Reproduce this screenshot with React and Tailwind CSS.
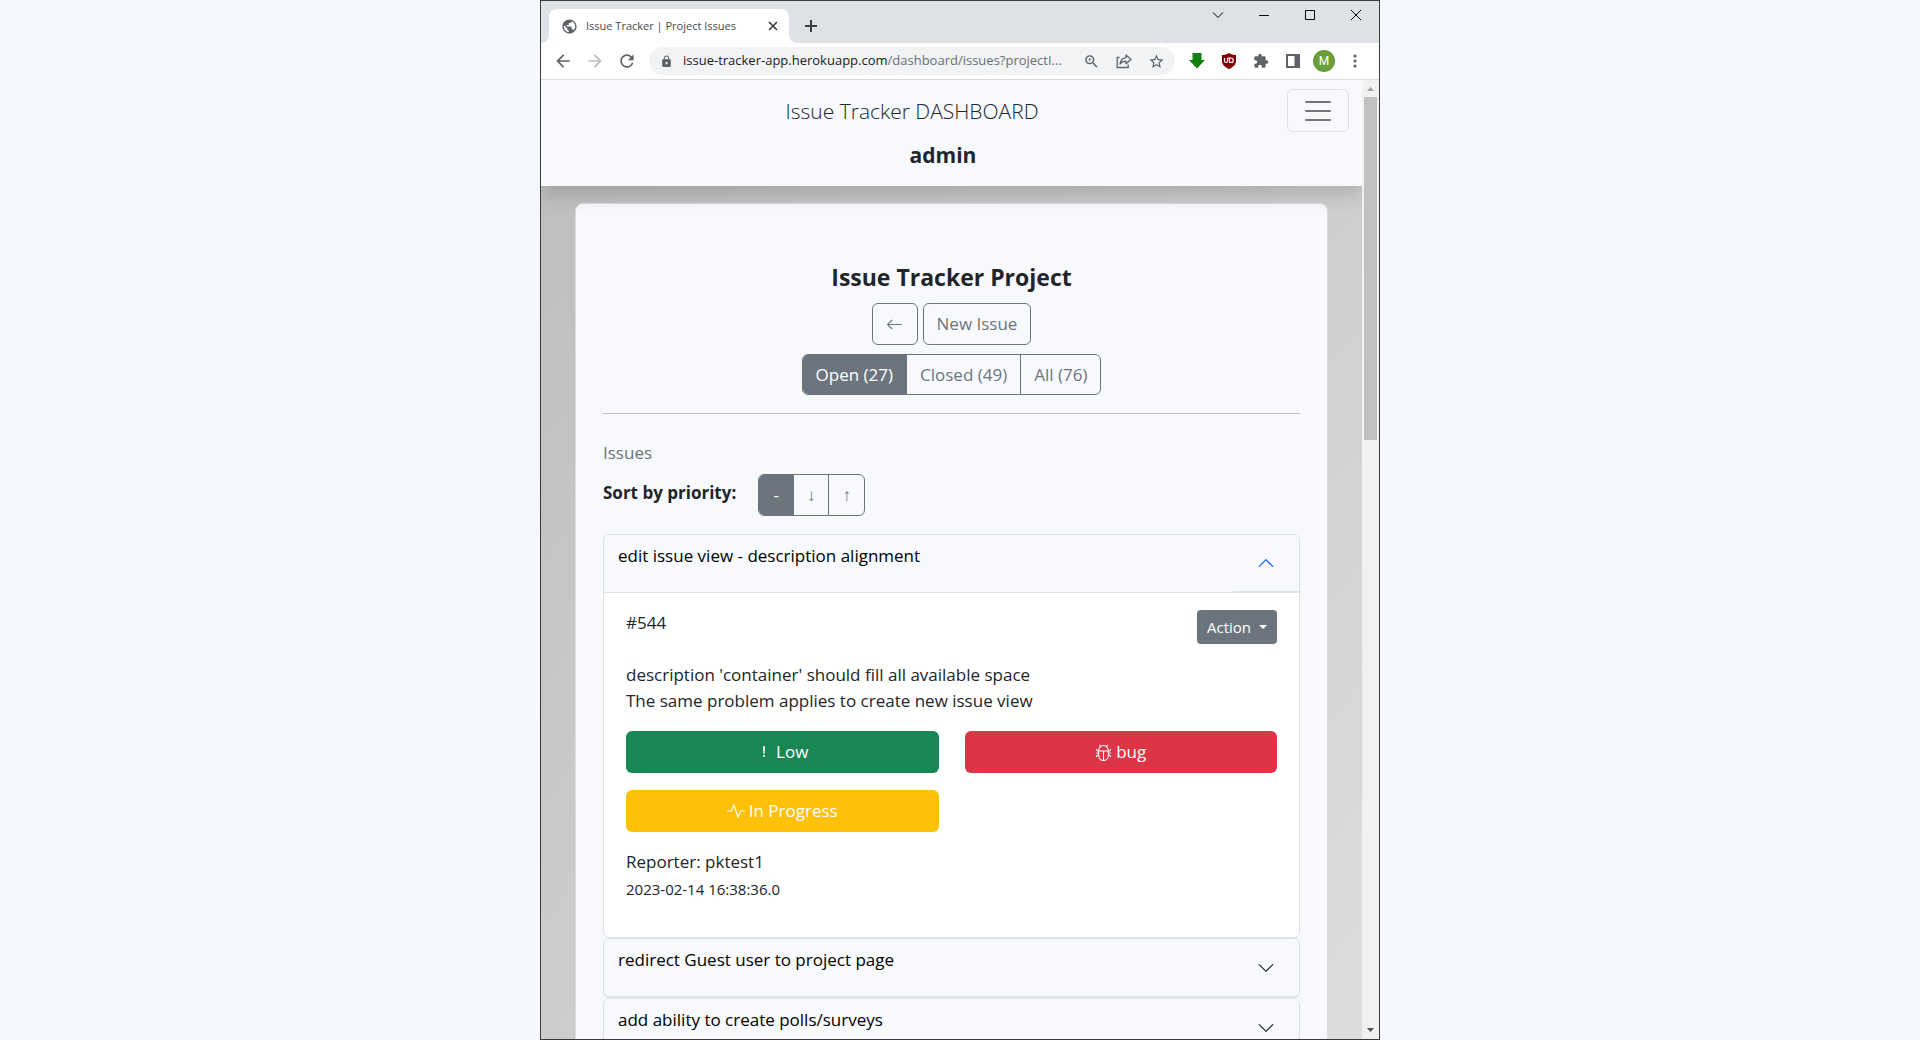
import { BsActivity, BsArrowLeft, BsBug, BsChevronDown, BsExclamationLg } from "react-icons/bs";
import {
  MdArrowBack,
  MdArrowForward,
  MdExtension,
  MdLock,
  MdOutlineZoomIn,
  MdPublic,
  MdRefresh,
  MdStarBorder,
} from "react-icons/md";

function WindowControls() {
  return (
    <div className="flex h-7 items-center text-black">
      <button aria-label="Search tabs" className="flex w-[46px] justify-center">
        <svg width="12" height="12" viewBox="0 0 12 12" fill="none" stroke="currentColor">
          <path d="M1 3.500 6 8.500 11 3.500" />
        </svg>
      </button>
      <button aria-label="Minimize" className="flex w-[46px] justify-center">
        <svg width="10" height="10" viewBox="0 0 10 10" fill="currentColor">
          <path d="M0 5h10v1H0z" />
        </svg>
      </button>
      <button aria-label="Maximize" className="flex w-[46px] justify-center">
        <svg width="10" height="10" viewBox="0 0 10 10" fill="none" stroke="currentColor">
          <path d="M.5.5h9v9h-9z" />
        </svg>
      </button>
      <button aria-label="Close" className="flex w-[46px] justify-center">
        <svg width="10" height="10" viewBox="0 0 10 10" fill="none" stroke="currentColor">
          <path d="m0 0 10 10M10 0 0 10" />
        </svg>
      </button>
    </div>
  );
}

function TabStrip() {
  return (
    <div className="flex h-[42px] shrink-0 items-end bg-[#dee1e6]">
      <div className="flex h-full flex-1 items-end">
        <span className="h-2 w-2 bg-white">
          <span className="block h-2 w-2 rounded-br-lg bg-[#dee1e6]" />
        </span>
        <div className="flex h-[34px] w-[240px] items-center rounded-t-lg bg-white pr-[10px] pl-3 text-[#45494d]">
          <MdPublic size={17} className="text-[#5f6368]" />
          <span className="ml-2 flex-1 text-[11px] whitespace-nowrap">Issue Tracker | Project Issues</span>
          <button aria-label="Close tab">
            <svg width="12" height="12" viewBox="0 0 12 12" fill="none" stroke="#3c4043" strokeWidth="1.700">
              <path d="m2 2 8 8M10 2 2 10" />
            </svg>
          </button>
        </div>
        <span className="h-2 w-2 bg-white">
          <span className="block h-2 w-2 rounded-bl-lg bg-[#dee1e6]" />
        </span>
        <button aria-label="New tab" className="mb-[11px] ml-2">
          <svg width="12" height="12" viewBox="0 0 12 12" fill="none" stroke="#3c4043" strokeWidth="2">
            <path d="M6 0v12M0 6h12" />
          </svg>
        </button>
      </div>
      <div className="self-start">
        <WindowControls />
      </div>
    </div>
  );
}

function Toolbar() {
  return (
    <div className="flex h-[37px] shrink-0 items-center border-b border-[#d9dadd] bg-white pr-4 pl-3 text-[#5f6368]">
      <button aria-label="Back" className="mr-3">
        <MdArrowBack size={20} />
      </button>
      <button aria-label="Forward" className="mr-3 text-[#babcbe]">
        <MdArrowForward size={20} />
      </button>
      <button aria-label="Reload" className="mr-3">
        <MdRefresh size={20} />
      </button>
      <div className="flex h-7 min-w-0 flex-1 items-center rounded-full bg-[#f1f3f4] pr-[10px] pl-[11px]">
        <MdLock size={13} />
        <span className="ml-[10px] flex-1 text-[13px] whitespace-nowrap text-[#6b6f74]">
          <span className="text-[#202124]">issue-tracker-app.herokuapp.com</span>/dashboard/issues?projectI...
        </span>
        <button aria-label="Zoom" className="mr-4">
          <MdOutlineZoomIn size={17} />
        </button>
        <button aria-label="Share this page" className="mr-4">
          <svg width="16" height="16" viewBox="0 0 16 16" fill="none" stroke="currentColor" strokeWidth="1.300">
            <path d="M3.500 4.500H1.200v10h11v-3" />
            <path d="M10 2v2.600C6.400 5 4.500 7.500 4 11c1.400-2 3.200-2.900 6-2.900v2.700l5-4.400z" strokeLinejoin="round" />
          </svg>
        </button>
        <button aria-label="Bookmark this tab">
          <MdStarBorder size={17} />
        </button>
      </div>
      <div className="ml-[14px] flex items-center gap-4">
        <button aria-label="Download">
          <svg width="16" height="16" viewBox="0 0 16 16" fill="#108010">
            <path d="M3.500 0h9v7H16l-8 8.500L0 7h3.500z" />
          </svg>
        </button>
        <button aria-label="uBlock Origin">
          <svg width="16" height="16" viewBox="0 0 16 16">
            <path d="M8 0c2 1.500 4.500 2 7 2v6c0 4-3.500 6.500-7 8-3.500-1.500-7-4-7-8V2c2.500 0 5-.5 7-2z" fill="#800000" />
            <path d="M3.500 5v3a1.500 1.500 0 0 0 3 0V5M6.500 5h2M8.500 5v4.500h1.500a2 2 0 0 0 0-4.500h-1.500" fill="none" stroke="#fff" strokeWidth="1.200" />
          </svg>
        </button>
        <button aria-label="Extensions">
          <MdExtension size={16} />
        </button>
        <button aria-label="Side panel">
          <svg width="16" height="16" viewBox="0 0 16 16" fill="currentColor" fillRule="evenodd">
            <path d="M1 1h14v14H1zm2 2v10h6.500V3z" />
          </svg>
        </button>
        <button aria-label="Profile" className="-mx-1 h-[22px] w-[22px] rounded-full bg-[#689f38] text-center font-[Roboto] text-xs leading-[22px] text-white">
          M
        </button>
        <button aria-label="Menu" className="px-[6px]">
          <svg width="4" height="16" viewBox="0 0 4 16" fill="currentColor">
            <circle cx="2" cy="3" r="1.600" />
            <circle cx="2" cy="8" r="1.600" />
            <circle cx="2" cy="13" r="1.600" />
          </svg>
        </button>
      </div>
    </div>
  );
}

function Scrollbar() {
  return (
    <div className="flex w-[17px] shrink-0 flex-col items-center bg-[#f1f1f1]">
      <svg width="17" height="17" viewBox="0 0 17 17" fill="#a3a3a3">
        <path d="M5 11h7L8.500 7z" />
      </svg>
      <div className="h-[343px] w-[13px] bg-[#c1c1c1]" />
      <svg className="mt-auto" width="17" height="17" viewBox="0 0 17 17" fill="#505050">
        <path d="M5 6h7l-3.500 4z" />
      </svg>
    </div>
  );
}

function SiteHeader() {
  return (
    <header className="relative shrink-0 bg-[#f8f9fc] pt-[9px] pr-[13px] pb-[15px] text-center shadow-[0_9px_18px_rgba(0,0,0,0.150)]">
      <div className="flex h-[43px] items-center">
        <div className="flex-1 pr-1 text-[21px] leading-8 font-light">Issue Tracker DASHBOARD</div>
        <button aria-label="Toggle navigation" className="flex h-[43px] w-[62px] items-center justify-center rounded-md border border-[#dfe0e1]">
          <svg width="28" height="24" viewBox="0 0 28 24" stroke="#737475" strokeWidth="2" strokeLinecap="round">
            <path d="M2 3h24M2 12h24M2 21h24" />
          </svg>
        </button>
      </div>
      <div className="mt-[7px] pr-1 text-[21px] leading-8 font-bold">admin</div>
    </header>
  );
}

function ButtonGroup({ label, items, cell }) {
  return (
    <div role="group" aria-label={label} className="flex divide-x divide-[#6c757d] overflow-hidden rounded-md border border-[#6c757d] text-[#6c757d]">
      {items.map((item, i) => (
        <button key={item} aria-pressed={i === 0} className={`${cell} ${i === 0 ? "bg-[#6c757d] text-white" : ""}`}>
          {item}
        </button>
      ))}
    </div>
  );
}

function AccordionHeader({ title, open }) {
  return (
    <h3>
      <button aria-expanded={open} className="flex h-[57px] w-full items-center justify-between bg-[#f8f9fc] pl-[14px] text-left text-black">
        <span className="mb-4">{title}</span>
        <span className={`flex w-[66px] items-center justify-end self-stretch pr-6 ${open ? "border-b border-[#dee2e6]" : ""}`}>
          <BsChevronDown size={18} className={open ? "rotate-180 text-[#0c63e4]" : "text-[#212529]"} />
        </span>
      </button>
    </h3>
  );
}

function Pill({ icon, children, color }) {
  return (
    <button className={`flex h-[42px] items-center justify-center gap-1 rounded-md text-white ${color}`}>
      {icon}
      {children}
    </button>
  );
}

function Issues() {
  return (
    <div className="mt-[18px] flex flex-col">
      <section className="overflow-hidden rounded-md border border-[#dee2e6] bg-white">
        <AccordionHeader title="edit issue view - description alignment" open />
        <div className="border-t border-[#dee2e6] px-[22px] pt-[17px] pb-[33px]">
          <div className="flex items-start justify-between">
            <div className="leading-[26px]">#544</div>
            <button className="flex h-[34px] items-center gap-2 rounded bg-[#6c757d] px-[10px] text-[15px] text-white">
              Action
              <svg width="8" height="4" viewBox="0 0 8 4" fill="currentColor">
                <path d="M0 0h8L4 4z" />
              </svg>
            </button>
          </div>
          <p className="mt-[18px] leading-[26px]">
            description 'container' should fill all available space
            <br />
            The same problem applies to create new issue view
          </p>
          <div className="mt-[17px] grid grid-cols-2 gap-x-[26px] gap-y-[17px]">
            <Pill color="bg-[#198754]" icon={<BsExclamationLg size={16} />}>Low</Pill>
            <Pill color="bg-[#dc3545]" icon={<BsBug size={17} />}>bug</Pill>
            <Pill color="bg-[#ffc107]" icon={<BsActivity size={18} />}>In Progress</Pill>
          </div>
          <div className="mt-[17px] leading-[26px]">Reporter: pktest1</div>
          <div className="text-[15px] leading-[29px]">2023-02-14 16:38:36.0</div>
        </div>
      </section>
      <section className="overflow-hidden rounded-md border border-b-2 border-[#dee2e6]">
        <AccordionHeader title="redirect Guest user to project page" open={false} />
      </section>
      <section className="overflow-hidden rounded-md border border-[#dee2e6]">
        <AccordionHeader title="add ability to create polls/surveys" open={false} />
      </section>
    </div>
  );
}

export default function App() {
  return (
    <div className="h-screen bg-[#f5f9ff] font-['Open_Sans','Noto_Sans',sans-serif] text-[17px] text-[#212529]">
      <div className="mx-auto flex h-full w-full max-w-[840px] flex-col border border-[#3a3a3a]">
        <TabStrip />
        <Toolbar />
        <div className="flex min-h-0 flex-1">
          <div className="flex min-w-0 flex-1 flex-col overflow-hidden bg-linear-to-br from-[#bdbdbd] to-[#dddddd]">
            <SiteHeader />
            <main className="mx-[34px] mt-[17px] shrink-0 rounded-lg border border-[#dcdddf] bg-[#f8f9fc] px-[27px] pt-[54px]">
              <h1 className="text-center text-[23px] leading-[38px] font-bold">Issue Tracker Project</h1>
              <div className="mt-[7px] flex justify-center gap-[5px] text-[#6c757d]">
                <button aria-label="Back to projects" className="flex h-[42px] w-[46px] items-center justify-center rounded-md border border-[#6c757d]">
                  <BsArrowLeft size={17} />
                </button>
                <button className="h-[42px] rounded-md border border-[#6c757d] px-[13px]">New Issue</button>
              </div>
              <div className="mt-[9px] flex justify-center">
                <ButtonGroup label="Issue status" items={["Open (27)", "Closed (49)", "All (76)"]} cell="h-[39px] px-[13px]" />
              </div>
              <hr className="mt-[18px] border-[#bfc1c4]" />
              <h2 className="mt-[26px] leading-[26px] text-[#6c757d]">Issues</h2>
              <div className="mt-[8px] flex items-start gap-[22px]">
                <span className="mt-[6px] leading-[26px] font-bold">Sort by priority:</span>
                <ButtonGroup label="Sort by priority" items={["-", "↓", "↑"]} cell="h-10 w-[35px]" />
              </div>
              <Issues />
            </main>
          </div>
          <Scrollbar />
        </div>
      </div>
    </div>
  );
}
